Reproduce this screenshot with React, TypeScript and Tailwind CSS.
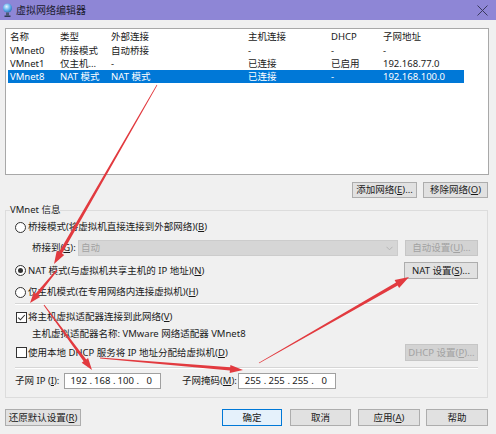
import React from "react";

const F = "font-['Noto_Sans','Noto_Sans_CJK_SC',sans-serif]";

function arrowPts(x1: number, y1: number, x2: number, y2: number, w0: number, w1: number, hl: number, hw: number) {
  const dx = x2 - x1, dy = y2 - y1;
  const L = Math.hypot(dx, dy);
  const ux = dx / L, uy = dy / L;
  const nx = -uy, ny = ux;
  const bx = x2 - ux * hl, by = y2 - uy * hl;
  const p = [
    [x1 + (nx * w0) / 2, y1 + (ny * w0) / 2],
    [bx + (nx * w1) / 2, by + (ny * w1) / 2],
    [bx + (nx * hw) / 2, by + (ny * hw) / 2],
    [x2, y2],
    [bx - (nx * hw) / 2, by - (ny * hw) / 2],
    [bx - (nx * w1) / 2, by - (ny * w1) / 2],
    [x1 - (nx * w0) / 2, y1 - (ny * w0) / 2],
  ];
  return p.map((q) => q.map((v) => v.toFixed(1)).join(",")).join(" ");
}

const U = ({ c }: { c: string }) => <span className="underline underline-offset-[1px]">{c}</span>;

function Btn({ children, className = "", disabled = false, focus = false }: { children: React.ReactNode; className?: string; disabled?: boolean; focus?: boolean }) {
  const base = disabled
    ? "bg-[#d3d3d3] border-[#c6c6c6] text-[#a2a2a2]"
    : focus
    ? "bg-[#e5f1fb] border-[#0078d7] text-[#1a1a1a]"
    : "bg-[#e1e1e1] border-[#adadad] text-[#1a1a1a]";
  return (
    <div className={`flex items-center justify-center border whitespace-nowrap ${base} ${className}`}>{children}</div>
  );
}

function Radio({ checked = false }: { checked?: boolean }) {
  return (
    <div className="w-[11px] h-[11px] rounded-full border border-[#333333] bg-white flex items-center justify-center shrink-0">
      {checked && <div className="w-[5px] h-[5px] rounded-full bg-[#333333]" />}
    </div>
  );
}

function Check({ checked = false }: { checked?: boolean }) {
  return (
    <div className="w-[11px] h-[11px] border border-[#333333] bg-white flex items-center justify-center shrink-0">
      {checked && (
        <svg width="9" height="9" viewBox="0 0 9 9">
          <polyline points="1.2,4.6 3.4,6.8 7.8,2" fill="none" stroke="#333" strokeWidth="1.1" />
        </svg>
      )}
    </div>
  );
}

const cols = ["w-[50px]", "w-[51px]", "w-[137px]", "w-[83px]", "w-[52px]", "w-[83px]"];

function Row({ cells, sel = false, header = false }: { cells: string[]; sel?: boolean; header?: boolean }) {
  return (
    <div className={`flex ${header ? "h-[14px]" : "h-[13px]"} items-center ${sel ? "bg-[#0078d7] text-white" : ""} w-[456px]`}>
      {cells.map((c, i) => (
        <div key={i} className={`${cols[i]} pl-[2px] whitespace-nowrap overflow-hidden`}>{c}</div>
      ))}
    </div>
  );
}

function IpBox({ parts, className = "" }: { parts: string[]; className?: string }) {
  return (
    <div className={`h-[16px] bg-white border border-[#a0a0a0] flex items-center pl-[3px] ${className}`}>
      {parts.map((p, i) => (
        <React.Fragment key={i}>
          <div className="w-[22px] text-center">{p}</div>
          {i < parts.length - 1 && <div className="w-[2px] text-center">.</div>}
        </React.Fragment>
      ))}
    </div>
  );
}

export default function App() {
  const red = "#e23a3f";
  return (
    <div className={`relative w-[496px] h-[434px] overflow-hidden bg-[#f0f0f0] text-[#1a1a1a] text-[9.5px] leading-[12px] ${F}`}>
      {/* title bar */}
      <div className="h-[20px] bg-[#8e86d6] flex items-center">
        <svg className="ml-[2px]" width="11" height="16" viewBox="0 0 11 16">
          <defs>
            <radialGradient id="g" cx="0.4" cy="0.35" r="0.7">
              <stop offset="0" stopColor="#e6f4ff" />
              <stop offset="0.5" stopColor="#6cb6ef" />
              <stop offset="1" stopColor="#2a6fb8" />
            </radialGradient>
          </defs>
          <circle cx="5.5" cy="6" r="4.6" fill="url(#g)" />
          <rect x="4" y="10.5" width="3" height="3" fill="#4a5a78" />
          <rect x="2.5" y="13.5" width="6" height="1.5" fill="#2f3a55" />
        </svg>
        <span className="ml-[3px] text-[10px] text-[#1b1b2e]">虚拟网络编辑器</span>
        <svg className="ml-auto mr-[8px]" width="11" height="11" viewBox="0 0 11 11">
          <line x1="0.5" y1="0.5" x2="10.5" y2="10.5" stroke="#3a3a5e" strokeWidth="1" />
          <line x1="10.5" y1="0.5" x2="0.5" y2="10.5" stroke="#3a3a5e" strokeWidth="1" />
        </svg>
      </div>

      <div className="pl-[5px] pr-[7px]">
        {/* list */}
        <div className="mt-[8px] h-[147px] bg-white border border-[#a8a8a8] pl-[2px] pt-[1px]">
          <Row header cells={["名称", "类型", "外部连接", "主机连接", "DHCP", "子网地址"]} />
          <Row cells={["VMnet0", "桥接模式", "自动桥接", "-", "-", "-"]} />
          <Row cells={["VMnet1", "仅主机...", "-", "已连接", "已启用", "192.168.77.0"]} />
          <Row sel cells={["VMnet8", "NAT 模式", "NAT 模式", "已连接", "-", "192.168.100.0"]} />
        </div>

        <div className="mt-[7px] mr-[1px] flex justify-end gap-[6px]">
          <Btn className="w-[65px] h-[16px]">添加网络(<U c="E" />)...</Btn>
          <Btn className="w-[65px] h-[16px]">移除网络(<U c="O" />)</Btn>
        </div>

        {/* group */}
        <fieldset className="mt-[6px] mr-[1px] border border-[#dcdcdc] p-0 m-0">
          <legend className="ml-[4px] px-0 leading-[12px]">VMnet 信息</legend>
          <div className="flex flex-col pl-[9px] pr-[9px] pb-[8px]">
            <div className="mt-[4px] h-[14px] flex items-center">
              <Radio />
              <span className="ml-[2px]">桥接模式(将虚拟机直接连接到外部网络)(<U c="B" />)</span>
            </div>
            <div className="mt-[6px] h-[16px] flex items-center">
              <span className="ml-[17px] w-[46px] whitespace-nowrap">桥接到(<U c="G" />):</span>
              <div className="w-[320px] h-[16px] bg-[#d6d6d6] border border-[#cccccc] flex items-center pl-[2px] text-[#a3a3a3]">
                <span>自动</span>
                <svg className="ml-auto mr-[4px]" width="7" height="5" viewBox="0 0 7 5">
                  <polyline points="0.5,0.8 3.5,3.8 6.5,0.8" fill="none" stroke="#b4b4b4" strokeWidth="1" />
                </svg>
              </div>
              <Btn disabled className="ml-auto w-[73px] h-[16px]">自动设置(<U c="U" />)...</Btn>
            </div>
            <div className="mt-[6px] h-[17px] flex items-center">
              <Radio checked />
              <span className="ml-[2px]">NAT 模式(与虚拟机共享主机的 IP 地址)(<U c="N" />)</span>
              <Btn className="ml-auto w-[74px] h-[17px]">NAT 设置(<U c="S" />)...</Btn>
            </div>
            <div className="mt-[7px] h-[12px] flex items-center">
              <Radio />
              <span className="ml-[2px]">仅主机模式(在专用网络内连接虚拟机)(<U c="H" />)</span>
            </div>
            <div className="mt-[5px] h-[2px] border-t border-[#d6d6d6] border-b border-b-white" />
            <div className="mt-[6px] h-[12px] flex items-center">
              <div className="ml-[1px]"><Check checked /></div>
              <span className="ml-[1px]">将主机虚拟适配器连接到此网络(<U c="V" />)</span>
            </div>
            <div className="mt-[5px] h-[12px] flex items-center">
              <span className="ml-[17px]">主机虚拟适配器名称: VMware 网络适配器 VMnet8</span>
            </div>
            <div className="mt-[4px] h-[17px] flex items-center">
              <div className="ml-[1px]"><Check /></div>
              <span className="ml-[1px]">使用本地 DHCP 服务将 IP 地址分配给虚拟机(<U c="D" />)</span>
              <Btn disabled className="ml-auto w-[73px] h-[17px]">DHCP 设置(<U c="P" />)...</Btn>
            </div>
            <div className="mt-[6px] h-[2px] border-t border-[#d6d6d6] border-b border-b-white" />
            <div className="mt-[4px] h-[16px] flex items-center">
              <span className="w-[49px] whitespace-nowrap">子网 IP (<U c="I" />):</span>
              <IpBox className="w-[97px]" parts={["192", "168", "100", "0"]} />
              <span className="ml-[21px] w-[56px] whitespace-nowrap">子网掩码(<U c="M" />):</span>
              <IpBox className="w-[98px]" parts={["255", "255", "255", "0"]} />
            </div>
          </div>
        </fieldset>

        {/* bottom buttons */}
        <div className="mt-[11px] mr-[1px] h-[17px] flex items-center">
          <Btn className="w-[76px] h-[17px]">还原默认设置(<U c="R" />)</Btn>
          <Btn focus className="ml-auto w-[60px] h-[17px]">确定</Btn>
          <Btn className="ml-[8px] w-[61px] h-[17px]">取消</Btn>
          <Btn className="ml-[7px] w-[62px] h-[17px]">应用(<U c="A" />)</Btn>
          <Btn className="ml-[6px] w-[62px] h-[17px]">帮助</Btn>
        </div>
      </div>

      {/* red annotation arrows */}
      <svg className="absolute left-0 top-0 pointer-events-none" width="496" height="434" viewBox="0 0 496 434">
        <polygon points={arrowPts(157, 85, 54, 264, 0.8, 3.4, 13, 8.5)} fill={red} />
        <polygon points={arrowPts(57, 270, 30, 303, 1.2, 3.2, 11, 8)} fill={red} />
        <polygon points={arrowPts(44, 305, 92, 370, 1, 3.2, 12, 8)} fill={red} />
        <polygon points={arrowPts(100, 358, 243, 370, 0.8, 3.2, 13, 8)} fill={red} />
        <polygon points={arrowPts(259, 363, 409, 277, 0.8, 3.4, 14, 9)} fill={red} />
      </svg>
    </div>
  );
}
